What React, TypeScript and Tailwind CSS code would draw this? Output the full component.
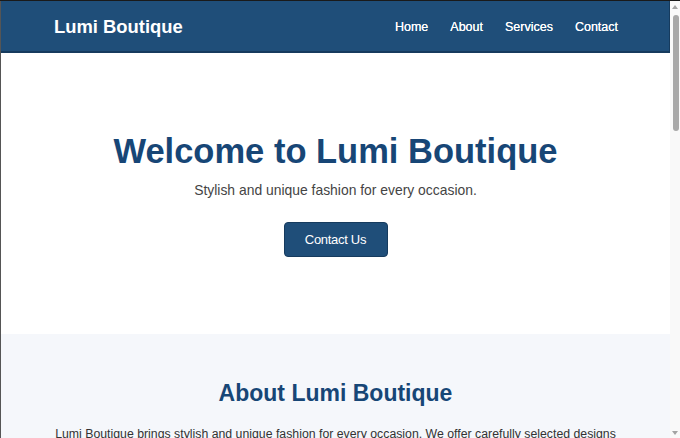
import React from "react";

export default function App() {
  return (
    <div
      className="w-[680px] h-[438px] overflow-hidden flex flex-col bg-white"
      style={{ fontFamily: '"Liberation Sans", Arial, sans-serif' }}
    >
      <div className="h-px w-full bg-[#1a1a1a] shrink-0" />
      <div className="flex flex-1 min-h-0">
        <div className="w-px bg-[#555555] shrink-0" />
        <div className="flex-1 min-w-0 flex flex-col">
          <header className="h-[52px] shrink-0 bg-[#1f4e79] border-b-2 border-r border-[#163b5e] flex items-center justify-between pl-[53px] pr-[51px] pt-[2px]">
            <div className="text-[18.4px] leading-[24px] font-bold text-white">Lumi Boutique</div>
            <nav className="flex items-center gap-[22px] text-[12.5px] leading-[16px] text-white [text-shadow:0_0_0.4px_#ffffff]">
              <a>Home</a>
              <a>About</a>
              <a>Services</a>
              <a>Contact</a>
            </nav>
          </header>
          <section className="h-[281px] shrink-0 bg-white flex flex-col items-center pt-[78px]">
            <h1 className="text-[34.5px] leading-[40px] font-bold text-[#174676]">Welcome to Lumi Boutique</h1>
            <p className="mt-[9px] text-[13.9px] leading-[20px] text-[#444444]">Stylish and unique fashion for every occasion.</p>
            <button className="mt-[22px] w-[104px] h-[35px] rounded-[4px] bg-[#1f4e79] border border-[#163b5e] text-white text-[13px] tracking-[-0.3px] flex items-center justify-center">
              Contact Us
            </button>
          </section>
          <section className="flex-1 bg-[#f5f7fb] flex flex-col items-center pt-[45px]">
            <h2 className="text-[23px] leading-[28px] font-bold text-[#174676]">About Lumi Boutique</h2>
            <p className="mt-[17px] w-[566px] text-center text-[12.3px] leading-[20px] text-[#333333]">
              Lumi Boutique brings stylish and unique fashion for every occasion. We offer carefully selected designs
              that combine comfort, quality, and timeless elegance for every customer.
            </p>
          </section>
        </div>
        <div className="w-[10px] shrink-0 bg-[#f9f9f9] flex flex-col items-center relative">
          <svg width="8" height="6" viewBox="0 0 8 6" className="mt-[3px]">
            <polygon points="4,1 7,5 1,5" fill="#a3a3a3" />
          </svg>
          <div className="mt-[5px] w-[6px] h-[116px] rounded-full bg-[#a8a8a8] ml-[1px]" />
          <svg width="8" height="6" viewBox="0 0 8 6" className="absolute bottom-[2px] left-[1px]">
            <polygon points="1,1 7,1 4,5" fill="#a3a3a3" />
          </svg>
        </div>
      </div>
    </div>
  );
}
